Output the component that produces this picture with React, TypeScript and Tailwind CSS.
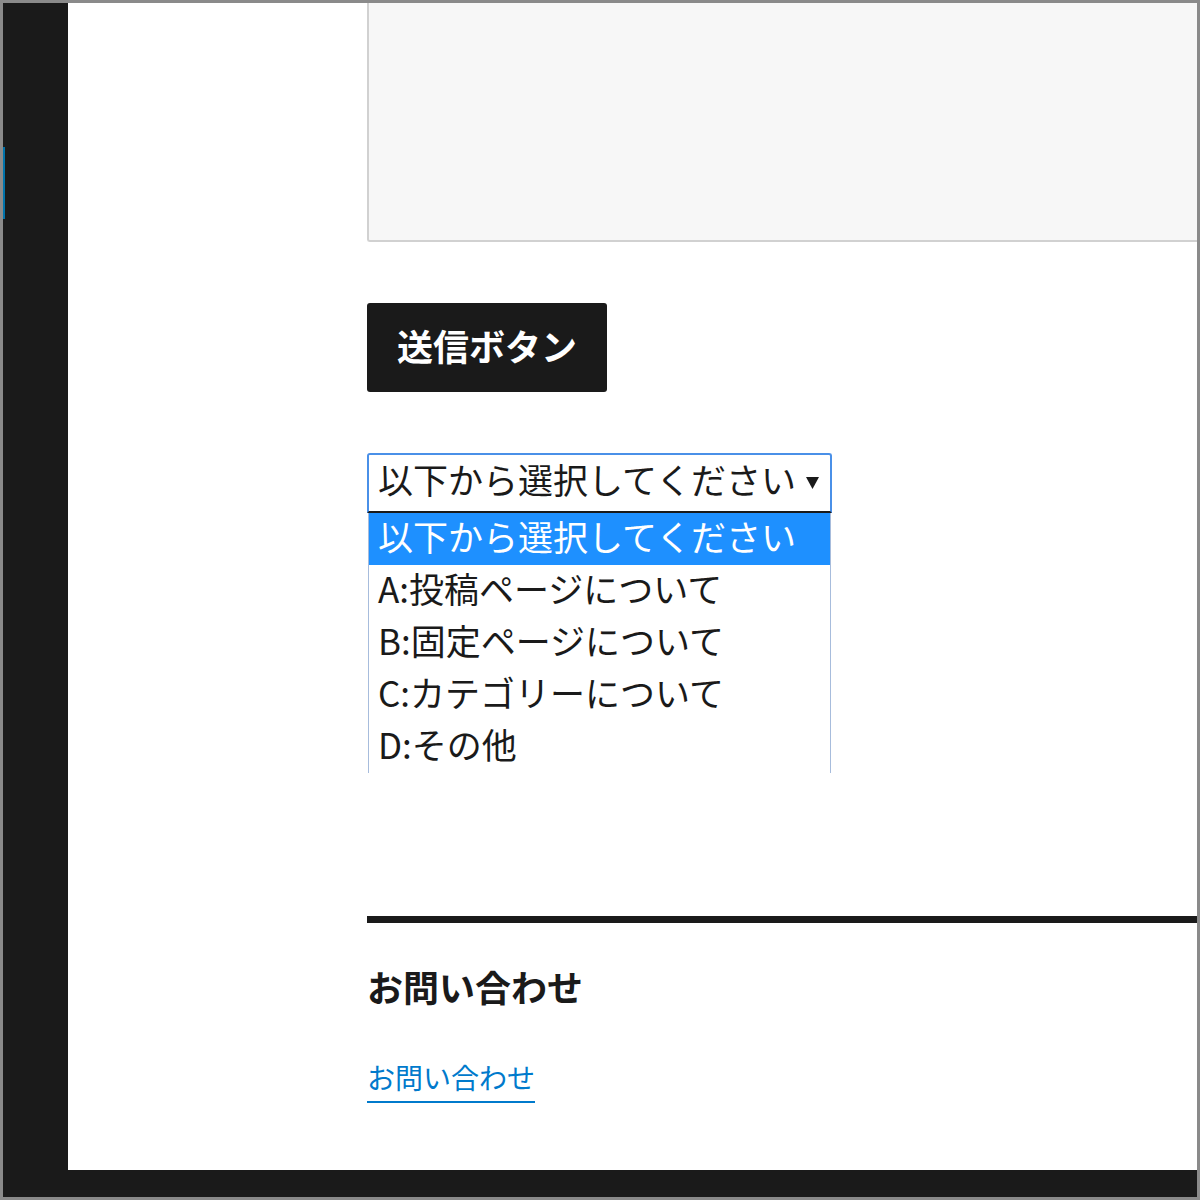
import React from "react";

const options = [
  "以下から選択してください",
  "A:投稿ページについて",
  "B:固定ページについて",
  "C:カテゴリーについて",
  "D:その他",
];

const jp = { fontFamily: '"Noto Sans CJK JP", "Noto Sans", sans-serif' };

const App: React.FC = () => {
  return (
    <div className="w-[1200px] h-[1200px] bg-[#8a8a8a] p-[3px]" style={jp}>
      <div className="flex flex-col h-full bg-[#1a1a1a]">
        <div className="flex flex-1 min-h-0">
          {/* sidebar */}
          <div className="w-[65px] shrink-0 bg-[#1a1a1a] pt-[144px]">
            <div className="w-[2px] h-[72px] bg-[#0073aa]" />
          </div>

          {/* main */}
          <div className="flex-1 bg-white overflow-hidden pl-[299px] text-[#1a1a1a]">
            {/* textarea (top is scrolled off) */}
            <div className="w-[900px] h-[239px] bg-[#f7f7f7] border-l-2 border-b-2 border-[#d1d1d1] rounded-bl-[3px]" />

            <button className="mt-[61px] w-[240px] h-[89px] pb-[6px] bg-[#1a1a1a] text-white rounded-[3px] text-[36px] font-bold leading-[50px] flex items-center justify-center">
              送信ボタン
            </button>

            {/* select with open list */}
            <div className="mt-[61px] w-[465px]">
              <div className="h-[60px] border-2 border-[#4a90e8] border-b-[#1a1a1a] rounded-t-[3px] flex items-center pl-[9px] pr-[11px]">
                <span className="text-[35px] leading-[46px] flex-1 whitespace-nowrap pb-[8px]">以下から選択してください</span>
                <svg width="13" height="12" viewBox="0 0 13 12">
                  <polygon points="0,0 13,0 6.5,12" fill="#1a1a1a" />
                </svg>
              </div>
              <div className="ml-[1px] w-[463px] h-[260px] border-x border-[#a7bcdc]">
                {options.map((o, i) => (
                  <div
                    key={o}
                    className={
                      "h-[52px] pl-[9px] text-[35px] leading-[46px] whitespace-nowrap " +
                      (i === 0 ? "bg-[#1e90ff] text-white" : "bg-white text-[#1a1a1a]")
                    }
                  >
                    {o}
                  </div>
                ))}
              </div>
            </div>

            <div className="mt-[143px] h-[7px] bg-[#1a1a1a]" />

            <h2 className="mt-[40px] text-[36px] font-bold leading-[46px] pb-[6px]">お問い合わせ</h2>

            <a href="#" className="mt-[44px] inline-block text-[28px] leading-[36px] pb-[6px] text-[#007acc] border-b-2 border-[#007acc]">
              お問い合わせ
            </a>
          </div>
        </div>
        <div className="h-[27px] shrink-0 bg-[#1a1a1a]" />
      </div>
    </div>
  );
};

export default App;
